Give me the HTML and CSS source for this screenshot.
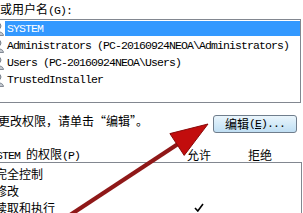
FILE: index.html
```html
<!DOCTYPE html>
<html lang="zh-CN">
<head>
<meta charset="utf-8">
<link rel="stylesheet" href="styles.css">
</head>
<body>
<div class="page">
  <div class="label">组或用户名<span class="m">(G):</span></div>
  <div class="listbox">
    <div class="row">
      <svg class="uicon" viewBox="0 0 14 14"><circle cx="7" cy="4" r="3" fill="#a9b0b8" stroke="#6b7480" stroke-width="0.8"/><path d="M1.5 13.5 C1.5 8.5 12.5 8.5 12.5 13.5 Z" fill="#c3c8cf" stroke="#6b7480" stroke-width="0.8"/></svg>
      <span class="name sel m">SYSTEM</span>
    </div>
    <div class="row">
      <svg class="uicon" viewBox="0 0 14 14"><circle cx="7" cy="4" r="3" fill="#a9b0b8" stroke="#6b7480" stroke-width="0.8"/><path d="M1.5 13.5 C1.5 8.5 12.5 8.5 12.5 13.5 Z" fill="#c3c8cf" stroke="#6b7480" stroke-width="0.8"/></svg>
      <span class="name m">Administrators (PC-20160924NEOA\Administrators)</span>
    </div>
    <div class="row">
      <svg class="uicon" viewBox="0 0 14 14"><circle cx="7" cy="4" r="3" fill="#a9b0b8" stroke="#6b7480" stroke-width="0.8"/><path d="M1.5 13.5 C1.5 8.5 12.5 8.5 12.5 13.5 Z" fill="#c3c8cf" stroke="#6b7480" stroke-width="0.8"/></svg>
      <span class="name m">Users (PC-20160924NEOA\Users)</span>
    </div>
    <div class="row">
      <svg class="uicon" viewBox="0 0 14 14"><circle cx="7" cy="4" r="3" fill="#a9b0b8" stroke="#6b7480" stroke-width="0.8"/><path d="M1.5 13.5 C1.5 8.5 12.5 8.5 12.5 13.5 Z" fill="#c3c8cf" stroke="#6b7480" stroke-width="0.8"/></svg>
      <span class="name m">TrustedInstaller</span>
    </div>
  </div>
  <div class="editrow">
    <div class="hint">要更改权限，请单击“编辑”。</div>
    <div class="btn">编辑<span class="m">(<u>E</u>)...</span></div>
  </div>
  <div class="permhead">
    <span><span class="m">SYSTEM </span>的权限<span class="m">(P)</span></span>
    <span class="col">允许</span>
    <span class="col">拒绝</span>
  </div>
  <div class="permbox">
    <div class="prow"><span>完全控制</span><span class="col"></span><span class="col"></span></div>
    <div class="prow"><span>修改</span><span class="col"></span><span class="col"></span></div>
    <div class="prow"><span>读取和执行</span><span class="col"><svg class="check" viewBox="0 0 10 9"><path d="M1 5 L3.8 8 L9 1" fill="none" stroke="#000" stroke-width="1.6"/></svg></span><span class="col"></span></div>
  </div>
</div>
<svg class="arrow" viewBox="0 0 303 213" width="303" height="213">
  <line x1="45" y1="231.5" x2="181" y2="142" stroke="#8f1818" stroke-width="4.2"/>
  <polygon points="208,124 169.9,133.6 184.2,155.4" fill="#c20d0d" stroke="#8a0a0a" stroke-width="1"/>
</svg>
</body>
</html>
```

FILE: styles.css
```css
html, body {
  margin: 0;
  padding: 0;
}
body {
  width: 303px;
  height: 213px;
  overflow: hidden;
  position: relative;
  background: #fff;
  color: #000;
  font-family: "Noto Sans CJK SC", sans-serif;
  font-size: 12px;
}
.page {
  width: 303px;
}
.m {
  font-family: "Liberation Mono", monospace;
  font-size: 11.5px;
  letter-spacing: -0.9px;
}
.label {
  height: 19px;
  line-height: 17px;
  margin-left: -12px;
  white-space: nowrap;
}
.listbox {
  margin-left: -10px;
  margin-right: 2px;
  height: 84px;
  box-sizing: border-box;
  border: 1px solid #828790;
  padding-top: 0;
  background: #fff;
}
.row {
  display: flex;
  align-items: center;
  height: 17px;
}
.uicon {
  width: 14px;
  height: 14px;
  flex: none;
  margin-left: 0;
}
.name {
  flex: 1;
  height: 15px;
  line-height: 15px;
  padding-left: 2px;
  white-space: nowrap;
}
.sel {
  background: #3399ff;
  color: #fff;
}
.editrow {
  display: flex;
  justify-content: space-between;
  align-items: flex-start;
  height: 21px;
  margin-top: 9px;
  margin-left: -14px;
}
.hint {
  line-height: 17px;
  white-space: nowrap;
}
.btn {
  margin-top: 3px;
  margin-right: 6px;
  width: 84px;
  height: 18px;
  box-sizing: border-box;
  border: 1px solid #6f7d8c;
  border-radius: 3px;
  background: linear-gradient(#eaf5fc, #d4eaf8 50%, #c0def3);
  display: flex;
  align-items: center;
  justify-content: center;
  line-height: 16px;
  white-space: nowrap;
}
.permhead {
  display: grid;
  grid-template-columns: 1fr 28px 24px;
  column-gap: 35px;
  padding-right: 31px;
  margin-left: -16px;
  margin-top: 12px;
  height: 17px;
  line-height: 17px;
  white-space: nowrap;
}
.col {
  text-align: center;
  display: flex;
  justify-content: center;
  align-items: center;
}
.permbox {
  margin-left: -10px;
  margin-right: 1px;
  border-top: 1px solid #828790;
  border-right: 1px solid #828790;
  height: 60px;
  padding-top: 2px;
  box-sizing: border-box;
}
.prow {
  display: grid;
  grid-template-columns: 1fr 28px 24px;
  column-gap: 35px;
  padding-right: 29px;
  padding-left: 5px;
  height: 17px;
  line-height: 17px;
  white-space: nowrap;
}
.check {
  width: 10px;
  height: 9px;
}
.arrow {
  position: absolute;
  left: 0;
  top: 0;
  pointer-events: none;
}
```
